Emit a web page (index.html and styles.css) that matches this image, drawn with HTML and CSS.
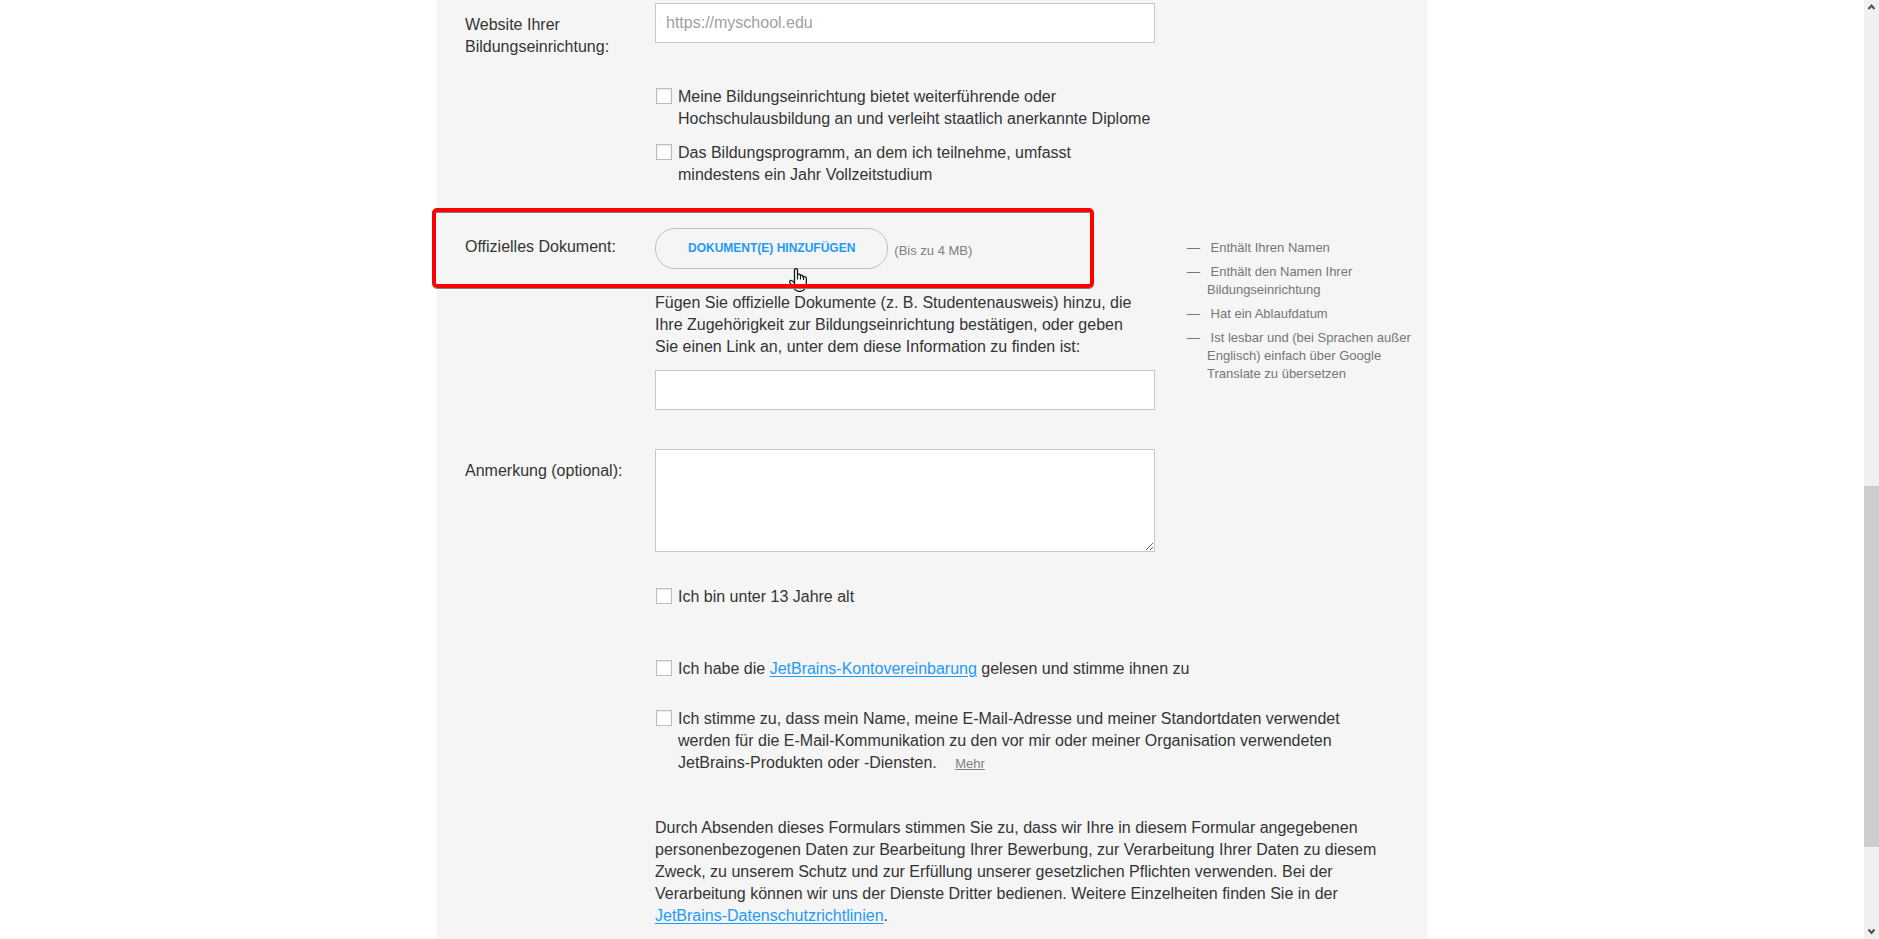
FILE: index.html
```html
<!DOCTYPE html>
<html lang="de">
<head>
<meta charset="utf-8">
<meta name="viewport" content="width=device-width, initial-scale=1">
<title>Bildungslizenz beantragen</title>
<link rel="stylesheet" href="styles.css">
</head>
<body>
<div class="viewport">
  <main class="content">
    <form class="panel">
      <div class="row">
        <label class="row-label" for="website">Website Ihrer Bildungseinrichtung:</label>
        <div class="row-field">
          <input class="text-input" id="website" type="text" placeholder="https://myschool.edu">
          <div class="check-group">
            <label class="check"><input class="check-box" type="checkbox"><span>Meine Bildungseinrichtung bietet weiterführende oder Hochschulausbildung an und verleiht staatlich anerkannte Diplome</span></label>
            <label class="check"><input class="check-box" type="checkbox"><span>Das Bildungsprogramm, an dem ich teilnehme, umfasst mindestens ein Jahr Vollzeitstudium</span></label>
          </div>
        </div>
      </div>

      <div class="row row-document">
        <label class="row-label" for="document-link">Offizielles Dokument:</label>
        <div class="row-field">
          <div class="upload">
            <button class="upload-button" type="button">DOKUMENT(E) HINZUFÜGEN</button>
            <span class="upload-limit">(Bis zu 4 MB)</span>
          </div>
          <p class="hint">Fügen Sie offizielle Dokumente (z. B. Studentenausweis) hinzu, die Ihre Zugehörigkeit zur Bildungseinrichtung bestätigen, oder geben Sie einen Link an, unter dem diese Information zu finden ist:</p>
          <input class="text-input" id="document-link" type="text">
        </div>
        <ul class="tips">
          <li class="tip"><span class="dash">—</span> Enthält Ihren Namen</li>
          <li class="tip"><span class="dash">—</span> Enthält den Namen Ihrer Bildungseinrichtung</li>
          <li class="tip"><span class="dash">—</span> Hat ein Ablaufdatum</li>
          <li class="tip"><span class="dash">—</span> Ist lesbar und (bei Sprachen außer Englisch) einfach über Google Translate zu übersetzen</li>
        </ul>
        <svg class="pointer" width="18" height="24" viewBox="0 0 18 24" aria-hidden="true">
          <path d="M5.5 16V2.2Q5.5.6 7 .6T8.500 2.200V7Q9.200 5.600 11 6.400L11.500 7.500Q13 6.500 14 8V9Q16.500 8 17.300 10V16Q17.300 18 16 19.500V20.500Q14.500 23.400 10.500 23.400Q7 23.400 5.500 21L1 14.800Q0 13 1.500 12.500Q3.200 12.200 5.500 15Z" fill="#fff" stroke="#14141f" stroke-width="1.300" stroke-linejoin="round"/>
          <path d="M8.500 6.500V11.500M11.500 7V11.500M14.500 8V12" fill="none" stroke="#14141f" stroke-width="1.200"/>
        </svg>
        <div class="highlight"></div>
      </div>

      <div class="row row-note">
        <label class="row-label" for="note">Anmerkung (optional):</label>
        <div class="row-field">
          <textarea class="text-area" id="note"></textarea>
        </div>
      </div>

      <div class="consents">
        <label class="check check-age"><input class="check-box" type="checkbox"><span>Ich bin unter 13 Jahre alt</span></label>
        <label class="check check-terms"><input class="check-box" type="checkbox"><span>Ich habe die <a class="link" href="#">JetBrains-Kontovereinbarung</a> gelesen und stimme ihnen zu</span></label>
        <label class="check check-mail"><input class="check-box" type="checkbox"><span>Ich stimme zu, dass mein Name, meine E-Mail-Adresse und meiner Standortdaten verwendet werden für die E-Mail-Kommunikation zu den vor mir oder meiner Organisation verwendeten JetBrains-Produkten oder -Diensten. <a class="more" href="#">Mehr</a></span></label>
        <p class="legal">Durch Absenden dieses Formulars stimmen Sie zu, dass wir Ihre in diesem Formular angegebenen personenbezogenen Daten zur Bearbeitung Ihrer Bewerbung, zur Verarbeitung Ihrer Daten zu diesem Zweck, zu unserem Schutz und zur Erfüllung unserer gesetzlichen Pflichten verwenden. Bei der Verarbeitung können wir uns der Dienste Dritter bedienen. Weitere Einzelheiten finden Sie in der <a class="link" href="#">JetBrains-Datenschutzrichtlinien</a>.</p>
      </div>
    </form>
  </main>

  <div class="scrollbar" aria-hidden="true">
    <svg class="scroll-arrow" width="15" height="15" viewBox="0 0 15 15"><path d="M4.500 9 7.500 5.500 10.500 9" fill="none" stroke="#505050" stroke-width="2"/></svg>
    <div class="scroll-track"><div class="scroll-thumb"></div></div>
    <svg class="scroll-arrow" width="15" height="15" viewBox="0 0 15 15"><path d="M4.500 5.500 7.500 9 10.500 5.500" fill="none" stroke="#505050" stroke-width="2"/></svg>
  </div>
</div>
</body>
</html>
```

FILE: styles.css
```css
* {
  box-sizing: border-box;
}

body {
  margin: 0;
  background: #fff;
  color: #343434;
  font: 16px/22px "Liberation Sans", Arial, sans-serif;
}

.viewport {
  display: grid;
  grid-template-columns: minmax(0, 1fr) 15px;
  height: 100vh;
  overflow: hidden;
}

.content {
  overflow: hidden;
}

.panel {
  max-width: 990px;
  min-height: 100%;
  margin: 0 auto;
  padding: 3px 12px 40px 28px;
  background: #f5f5f5;
}

.row {
  display: grid;
  grid-template-columns: 190px minmax(0, 500px) minmax(0, 1fr);
}

.row-label {
  padding: 11px 30px 0 0;
}

.text-input {
  display: block;
  width: 100%;
  height: 40px;
  padding: 0 10px;
  border: 1px solid #c8c8c8;
  border-radius: 0;
  background: #fff;
  color: #343434;
  font: inherit;
}

.text-input::placeholder {
  color: #a0a0a0;
  opacity: 1;
}

.text-area {
  display: block;
  width: 100%;
  height: 103px;
  padding: 8px 10px;
  border: 1px solid #c8c8c8;
  border-radius: 0;
  background: #fff;
  font: inherit;
  resize: both;
}

.check-group {
  display: grid;
  gap: 12px;
  margin-top: 43px;
}

.check {
  display: flex;
  align-items: flex-start;
  gap: 6px;
}

.check-box {
  flex: none;
  appearance: none;
  width: 16px;
  height: 16px;
  margin: 2px 0 0 1px;
  border: 1px solid #bcbcbc;
  background: #fff;
  box-shadow: inset 0 1px 2px #e8e8e8;
}

.row-document {
  position: relative;
  margin-top: 39px;
}

.upload {
  display: flex;
  align-items: center;
  gap: 6px;
  padding-top: 3px;
}

.upload-button {
  height: 41px;
  padding: 0 32px 2px;
  border: 1px solid #c0c0c0;
  border-radius: 20px;
  background: transparent;
  color: #1d9bf9;
  font: bold 12px/18px "Liberation Sans", Arial, sans-serif;
}

.upload-limit {
  padding-top: 4px;
  color: #808080;
  font-size: 13px;
  line-height: 18px;
}

.hint {
  margin: 23px 0 12px;
  padding-right: 12px;
}

.tips {
  display: grid;
  align-content: start;
  gap: 6px;
  margin: 0;
  padding: 14px 0 0 52px;
  color: #757575;
  font-size: 13px;
  line-height: 18px;
  list-style: none;
}

.tip {
  text-indent: -20px;
}

.dash {
  display: inline-block;
  width: 20px;
  text-indent: 0;
}

.pointer {
  position: absolute;
  top: 43px;
  left: 324px;
}

.highlight {
  position: absolute;
  top: -17px;
  left: -33px;
  width: 662px;
  height: 80px;
  border: 4px solid #f00;
  border-radius: 5px;
  box-shadow: 0 1px 0 #808080, inset 0 1px 0 #808080;
  pointer-events: none;
}

.row-note {
  margin-top: 39px;
}

.consents {
  margin: 34px 28px 0 190px;
}

.check-terms {
  margin-top: 50px;
}

.check-mail {
  margin-top: 28px;
}

.legal {
  margin: 42px 0 0;
}

.link {
  color: #1d9bf9;
  text-underline-offset: 2px;
}

.more {
  margin-left: 14px;
  color: #808080;
  font-size: 13px;
}

.scrollbar {
  display: flex;
  flex-direction: column;
  background: #f0f0f0;
}

.scroll-arrow {
  flex: none;
}

.scroll-track {
  flex: 1;
  padding-top: 471px;
}

.scroll-thumb {
  height: 361px;
  background: #cdcdcd;
}
```
